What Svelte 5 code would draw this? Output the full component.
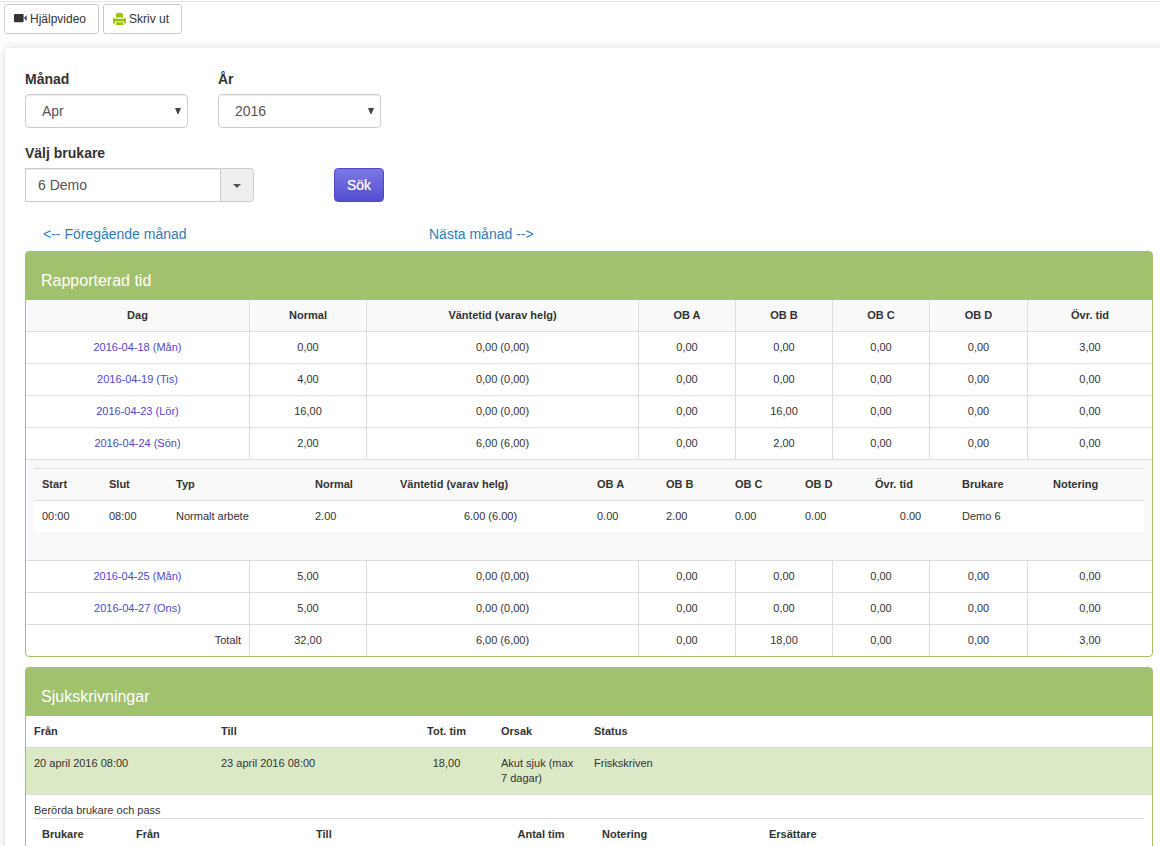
<script>
  const months = ['Jan', 'Feb', 'Mar', 'Apr', 'Maj', 'Jun', 'Jul', 'Aug', 'Sep', 'Okt', 'Nov', 'Dec'];
  const years = ['2015', '2016', '2017'];
  let month = $state('Apr');
  let year = $state('2016');
  let client = $state('6 Demo');

  const reportCols = [224, 117, 272, 97, 97, 97, 98, 124];
  const reportHead = ['Dag', 'Normal', 'Väntetid (varav helg)', 'OB A', 'OB B', 'OB C', 'OB D', 'Övr. tid'];
  const days = [
    { day: '2016-04-18 (Mån)', v: ['0,00', '0,00 (0,00)', '0,00', '0,00', '0,00', '0,00', '3,00'] },
    { day: '2016-04-19 (Tis)', v: ['4,00', '0,00 (0,00)', '0,00', '0,00', '0,00', '0,00', '0,00'] },
    { day: '2016-04-23 (Lör)', v: ['16,00', '0,00 (0,00)', '0,00', '16,00', '0,00', '0,00', '0,00'] },
    {
      day: '2016-04-24 (Sön)',
      v: ['2,00', '6,00 (6,00)', '0,00', '2,00', '0,00', '0,00', '0,00'],
      shifts: [['00:00', '08:00', 'Normalt arbete', '2.00', '6.00 (6.00)', '0.00', '2.00', '0.00', '0.00', '0.00', 'Demo 6', '']]
    },
    { day: '2016-04-25 (Mån)', v: ['5,00', '0,00 (0,00)', '0,00', '0,00', '0,00', '0,00', '0,00'] },
    { day: '2016-04-27 (Ons)', v: ['5,00', '0,00 (0,00)', '0,00', '0,00', '0,00', '0,00', '0,00'] }
  ];
  const totals = ['32,00', '6,00 (6,00)', '0,00', '18,00', '0,00', '0,00', '3,00'];

  const shiftCols = [67, 67, 139, 85, 197, 69, 69, 70, 70, 87, 91, 99];
  const shiftHead = ['Start', 'Slut', 'Typ', 'Normal', 'Väntetid (varav helg)', 'OB A', 'OB B', 'OB C', 'OB D', 'Övr. tid', 'Brukare', 'Notering'];

  const sickCols = [187, 187, 93, 93, 566];
  const affectedCols = [94, 180, 180, 106, 167, 383];
  const affectedHead = ['Brukare', 'Från', 'Till', 'Antal tim', 'Notering', 'Ersättare'];
</script>

{#snippet cols(widths)}
  <colgroup>
    {#each widths as w}<col style="width: {w}px" />{/each}
  </colgroup>
{/snippet}

{#snippet arrow()}
  <svg width="6" height="6" viewBox="0 0 6 6" aria-hidden="true"><path d="M0 0h6L3.5 6h-1z" fill="#444" /></svg>
{/snippet}

<div class="toolbar">
  <button class="tool" type="button">
    <svg width="13" height="12" viewBox="0 0 13 12" aria-hidden="true">
      <rect x="0" y="1" width="9.6" height="8.2" rx="0.8" fill="#333" />
      <path d="M10 5.1 12.6 2.2v5.8z" fill="#333" />
    </svg>
    Hjälpvideo
  </button>
  <button class="tool" type="button">
    <svg width="13" height="12" viewBox="0 0 13 12" aria-hidden="true">
      <g fill="#9cc10c">
        <path d="M3 4.6V1.2L4 0h5l1 1.2v3.4z" />
        <path d="M0 10.4V6.2Q0 5 1.2 5H2v.8h9V5h.8Q13 5 13 6.2v4.2h-2V8.6H2v1.8z" />
        <path d="M3.2 9.2h6.6l.8 2.8H2.4z" />
      </g>
    </svg>
    Skriv ut
  </button>
</div>

<main>
  <form onsubmit={(e) => e.preventDefault()}>
    <div class="fields">
      <div class="field">
        <label for="month">Månad</label>
        <div class="select">
          <select id="month" bind:value={month}>
            {#each months as m}<option>{m}</option>{/each}
          </select>
          {@render arrow()}
        </div>
      </div>
      <div class="field">
        <label for="year">År</label>
        <div class="select">
          <select id="year" bind:value={year}>
            {#each years as y}<option>{y}</option>{/each}
          </select>
          {@render arrow()}
        </div>
      </div>
    </div>
    <label for="client">Välj brukare</label>
    <div class="search">
      <div class="combo">
        <input id="client" type="text" bind:value={client} />
        <button type="button" aria-label="Visa brukare"><span class="caret"></span></button>
      </div>
      <button class="primary" type="submit">Sök</button>
    </div>
  </form>

  <nav>
    <a href="#prev">&lt;-- Föregående månad</a>
    <a href="#next">Nästa månad --&gt;</a>
  </nav>

  <section class="panel">
    <h2>Rapporterad tid</h2>
    <table class="grid">
      {@render cols(reportCols)}
      <thead>
        <tr>{#each reportHead as h}<th scope="col">{h}</th>{/each}</tr>
      </thead>
      <tbody>
        {#each days as d}
          <tr>
            <td><a href="#day">{d.day}</a></td>
            {#each d.v as v}<td>{v}</td>{/each}
          </tr>
          {#if d.shifts}
            <tr class="detail">
              <td colspan="8">
                <table class="inner shifts">
                  {@render cols(shiftCols)}
                  <thead>
                    <tr>{#each shiftHead as h}<th scope="col">{h}</th>{/each}</tr>
                  </thead>
                  <tbody>
                    {#each d.shifts as s}
                      <tr>{#each s as v, i}<td class:mid={i === 4 || i === 9}>{v}</td>{/each}</tr>
                    {/each}
                  </tbody>
                </table>
              </td>
            </tr>
          {/if}
        {/each}
        <tr>
          <td class="total">Totalt</td>
          {#each totals as v}<td>{v}</td>{/each}
        </tr>
      </tbody>
    </table>
  </section>

  <section class="panel">
    <h2>Sjukskrivningar</h2>
    <table>
      {@render cols(sickCols)}
      <thead>
        <tr>
          <th scope="col">Från</th>
          <th scope="col">Till</th>
          <th scope="col" class="mid">Tot. tim</th>
          <th scope="col">Orsak</th>
          <th scope="col">Status</th>
        </tr>
      </thead>
      <tbody>
        <tr class="done">
          <td>20 april 2016 08:00</td>
          <td>23 april 2016 08:00</td>
          <td class="mid">18,00</td>
          <td>Akut sjuk (max 7 dagar)</td>
          <td>Friskskriven</td>
        </tr>
        <tr>
          <td colspan="5">
            Berörda brukare och pass
            <table class="inner">
              {@render cols(affectedCols)}
              <thead>
                <tr>{#each affectedHead as h, i}<th scope="col" class:mid={i === 3}>{h}</th>{/each}</tr>
              </thead>
            </table>
          </td>
        </tr>
      </tbody>
    </table>
  </section>
</main>

<style>
  :global(body) {
    margin: 0;
    overflow-x: hidden;
    background: #fff;
    color: #333;
    font: 14px/20px "Liberation Sans", Arial, sans-serif;
  }
  :global(*) {
    box-sizing: border-box;
  }
  button,
  input,
  select {
    font: inherit;
    margin: 0;
  }
  a {
    color: #337ab7;
    text-decoration: none;
  }

  .toolbar {
    display: flex;
    gap: 4px;
    margin-top: 1px;
    padding: 2px 4px 14px;
    border-top: 1px solid #e5e5e5;
  }
  .tool {
    display: flex;
    align-items: center;
    gap: 3px;
    height: 30px;
    padding: 0 12px 0 9px;
    border: 1px solid #ccc;
    border-radius: 3px;
    background: #fff;
    color: #333;
    font-size: 12px;
    line-height: 18px;
  }

  /* The sheet runs on past the right edge, so its shadow has no end there. */
  main {
    margin: 0 -20px 0 5px;
    padding: 21px 27px 20px 20px;
    border-radius: 4px;
    background: #fff;
    box-shadow: 0 0 10px rgba(0, 0, 0, 0.17);
  }

  .fields {
    display: grid;
    grid-template-columns: repeat(6, 1fr);
    gap: 30px;
    margin-bottom: 15px;
  }
  label {
    display: block;
    margin-bottom: 5px;
    font-weight: bold;
  }
  .select {
    position: relative;
  }
  .select :global(svg) {
    position: absolute;
    right: 7px;
    top: 14px;
    pointer-events: none;
  }
  select,
  input {
    width: 100%;
    height: 34px;
    border: 1px solid #ccc;
    background: #fff;
    color: #555;
    box-shadow: inset 0 1px 1px rgba(0, 0, 0, 0.075);
  }
  select {
    appearance: none;
    padding: 6px 16px;
    border-radius: 4px;
  }
  .search {
    display: flex;
    gap: 80px;
  }
  .combo {
    display: flex;
    width: 229px;
  }
  .combo input {
    flex: 1;
    min-width: 0;
    padding: 6px 12px;
    border-right: 0;
    border-radius: 0;
  }
  .combo button {
    display: flex;
    align-items: center;
    justify-content: center;
    width: 34px;
    padding: 2px 0 0;
    border: 1px solid #ccc;
    border-radius: 0 4px 4px 0;
    background: #eee;
  }
  .caret {
    border: 4px solid transparent;
    border-top-color: #555;
    border-bottom: 0;
  }
  .primary {
    height: 34px;
    padding: 0 12px;
    border: 1px solid #4f49c8;
    border-radius: 4px;
    background: linear-gradient(#7d78e6, #544dd0);
    color: #fff;
    text-shadow: 0 0 1px rgba(255, 255, 255, 0.6);
  }

  nav {
    display: grid;
    grid-template-columns: repeat(3, 1fr);
    gap: 30px;
    margin: 22px 0 7px;
  }
  nav a {
    padding-left: 18px;
  }

  .panel {
    margin-bottom: 10px;
    border: 1px solid #a1c16d;
    border-radius: 4px;
    background: #fff;
  }
  h2 {
    margin: 0;
    padding: 19px 15px 9px;
    background: #a1c16d;
    color: #fff;
    font-size: 16px;
    font-weight: normal;
    line-height: 20px;
  }

  table {
    width: 100%;
    table-layout: fixed;
    border-collapse: separate;
    border-spacing: 0;
    font-size: 11px;
    line-height: 15px;
  }
  th,
  td {
    padding: 8px;
    text-align: left;
    vertical-align: top;
  }
  td {
    border-top: 1px solid #ddd;
  }
  .mid {
    text-align: center;
  }

  .grid > thead th {
    background: #f9f9f9;
  }
  .grid > thead th,
  .grid > tbody > tr > td {
    border-right: 1px solid #ddd;
    text-align: center;
  }
  .grid > thead th:last-child,
  .grid > tbody > tr > td:last-child {
    border-right: 0;
  }
  .grid > tbody > tr > .total {
    text-align: right;
  }
  .grid a {
    color: #4f49c8;
  }
  .detail > td {
    background: #f9f9f9;
  }

  .inner th {
    border-top: 1px solid #ddd;
  }
  .shifts {
    margin-bottom: 20px;
  }
  .shifts td {
    background: #fff;
  }
  .done td {
    background: #dbe9c6;
  }
</style>
